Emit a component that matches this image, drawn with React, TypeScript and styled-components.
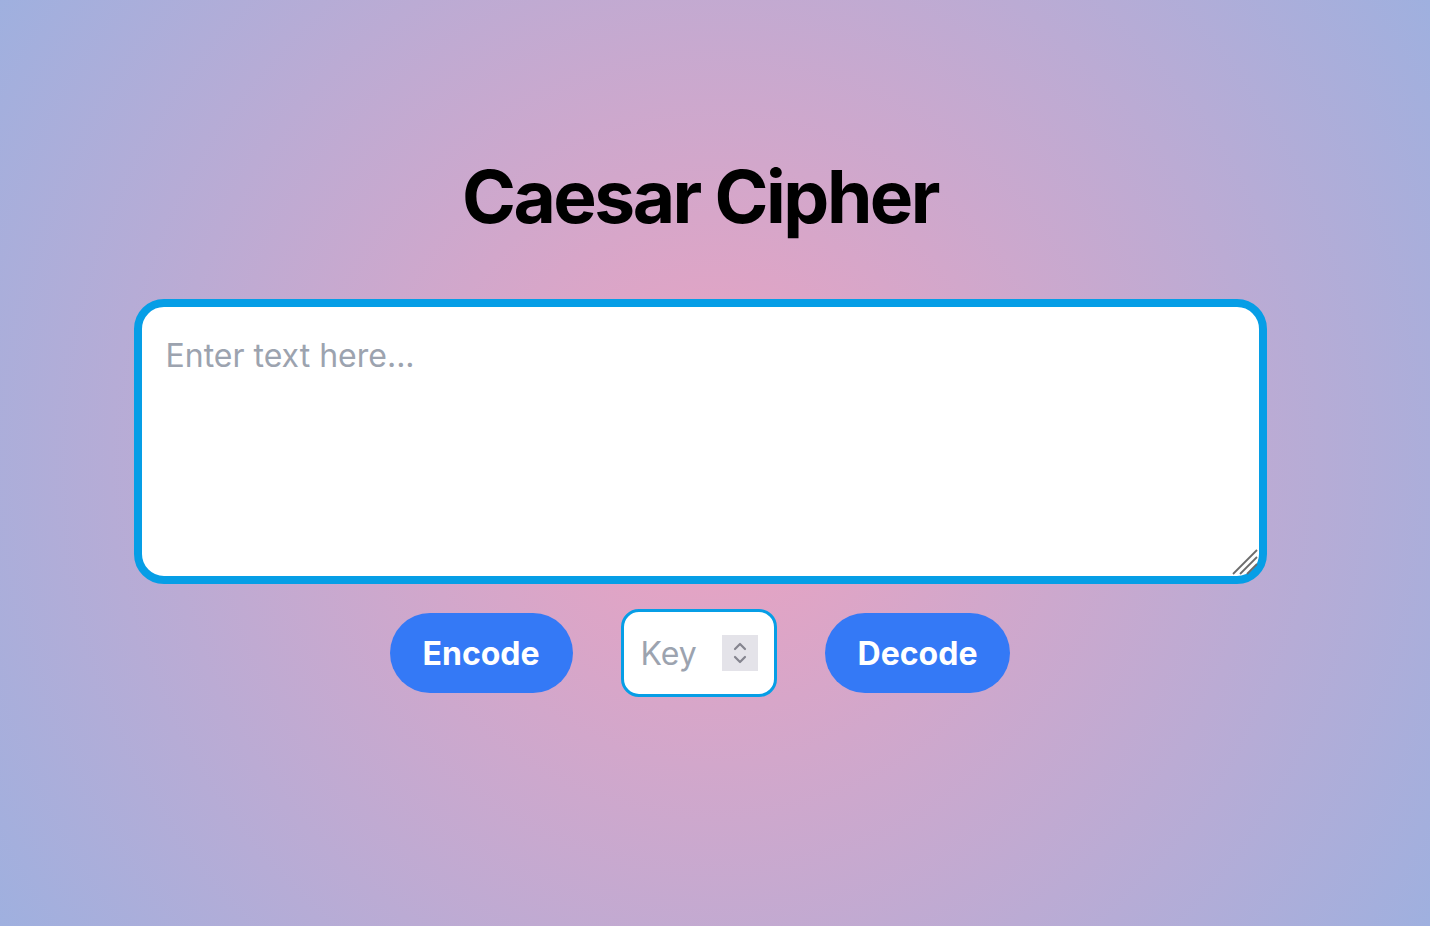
import React from 'react';
import styled, { createGlobalStyle } from 'styled-components';

const GlobalStyle = createGlobalStyle`
  html, body {
    margin: 0;
    padding: 0;
    height: 100%;
  }
  body {
    font-family: Inter, "Liberation Sans", sans-serif;
    background: radial-gradient(circle at 50% 50%, #eea2c0 0%, #9fb0df 100%);
    background-attachment: fixed;
    min-height: 100vh;
  }
`;

const Page = styled.main`
  min-height: 100vh;
  box-sizing: border-box;
  display: flex;
  flex-direction: column;
  align-items: center;
  padding: 160px 30px 0 0;
`;

const Title = styled.h1`
  margin: 0;
  font-size: 73px;
  line-height: 1;
  font-weight: 700;
  color: #000;
  letter-spacing: -2.5px;
`;

const TextWrap = styled.div`
  position: relative;
  margin-top: 66px;
`;

const TextBox = styled.textarea`
  display: block;
  width: 1133px;
  height: 285px;
  box-sizing: border-box;
  border: 8px solid #069ee6;
  border-radius: 30px;
  padding: 29px 24px;
  font-family: Inter, "Liberation Sans", sans-serif;
  font-size: 32px;
  color: #111;
  background: #fff;
  outline: none;
  resize: none;

  &::placeholder {
    color: #9ca3af;
  }
`;

const Grip = styled.span`
  position: absolute;
  right: 9px;
  bottom: 9px;
  width: 26px;
  height: 26px;
  pointer-events: none;
`;

const Controls = styled.div`
  margin-top: 25px;
  display: flex;
  align-items: center;
  gap: 48px;
`;

const ActionButton = styled.button`
  height: 80px;
  padding: 0 33px;
  border: none;
  border-radius: 40px;
  background: #3479f6;
  color: #fff;
  font-family: Inter, "Liberation Sans", sans-serif;
  font-size: 32px;
  font-weight: 700;
  cursor: pointer;
`;

const KeyField = styled.label`
  width: 156px;
  height: 88px;
  box-sizing: border-box;
  border: 3px solid #069ee6;
  border-radius: 18px;
  background: #fff;
  display: flex;
  align-items: center;
  padding: 0 16px 0 17px;
  gap: 6px;
`;

const KeyInput = styled.input`
  flex: 1;
  min-width: 0;
  border: none;
  outline: none;
  background: transparent;
  padding: 0;
  font-family: Inter, "Liberation Sans", sans-serif;
  font-size: 32px;
  color: #111;

  &::placeholder {
    color: #9ca3af;
  }
`;

const Spinner = styled.span`
  width: 36px;
  height: 36px;
  flex: none;
  background: #e4e3e9;
  display: flex;
  align-items: center;
  justify-content: center;
`;

function SpinnerIcon() {
  return (
    <svg width="18" height="30" viewBox="0 0 18 30" fill="none">
      <path d="M4 11 L9 6 L14 11" stroke="#85858f" strokeWidth="2.2" strokeLinecap="round" strokeLinejoin="round" />
      <path d="M4 19 L9 24 L14 19" stroke="#85858f" strokeWidth="2.2" strokeLinecap="round" strokeLinejoin="round" />
    </svg>
  );
}

function GripIcon() {
  return (
    <svg width="26" height="26" viewBox="0 0 26 26" fill="none">
      <path d="M1 25 L25 1" stroke="#6b6b6b" strokeWidth="1.8" />
      <path d="M8 25 L25 8" stroke="#6b6b6b" strokeWidth="1.8" />
      <path d="M15 25 L25 15" stroke="#6b6b6b" strokeWidth="1.8" />
    </svg>
  );
}

function App() {
  return (
    <>
      <GlobalStyle />
      <Page>
        <Title>Caesar Cipher</Title>
        <TextWrap>
          <TextBox placeholder="Enter text here..." />
          <Grip>
            <GripIcon />
          </Grip>
        </TextWrap>
        <Controls>
          <ActionButton type="button">Encode</ActionButton>
          <KeyField>
            <KeyInput type="text" inputMode="numeric" placeholder="Key" />
            <Spinner>
              <SpinnerIcon />
            </Spinner>
          </KeyField>
          <ActionButton type="button">Decode</ActionButton>
        </Controls>
      </Page>
    </>
  );
}

export default App;
